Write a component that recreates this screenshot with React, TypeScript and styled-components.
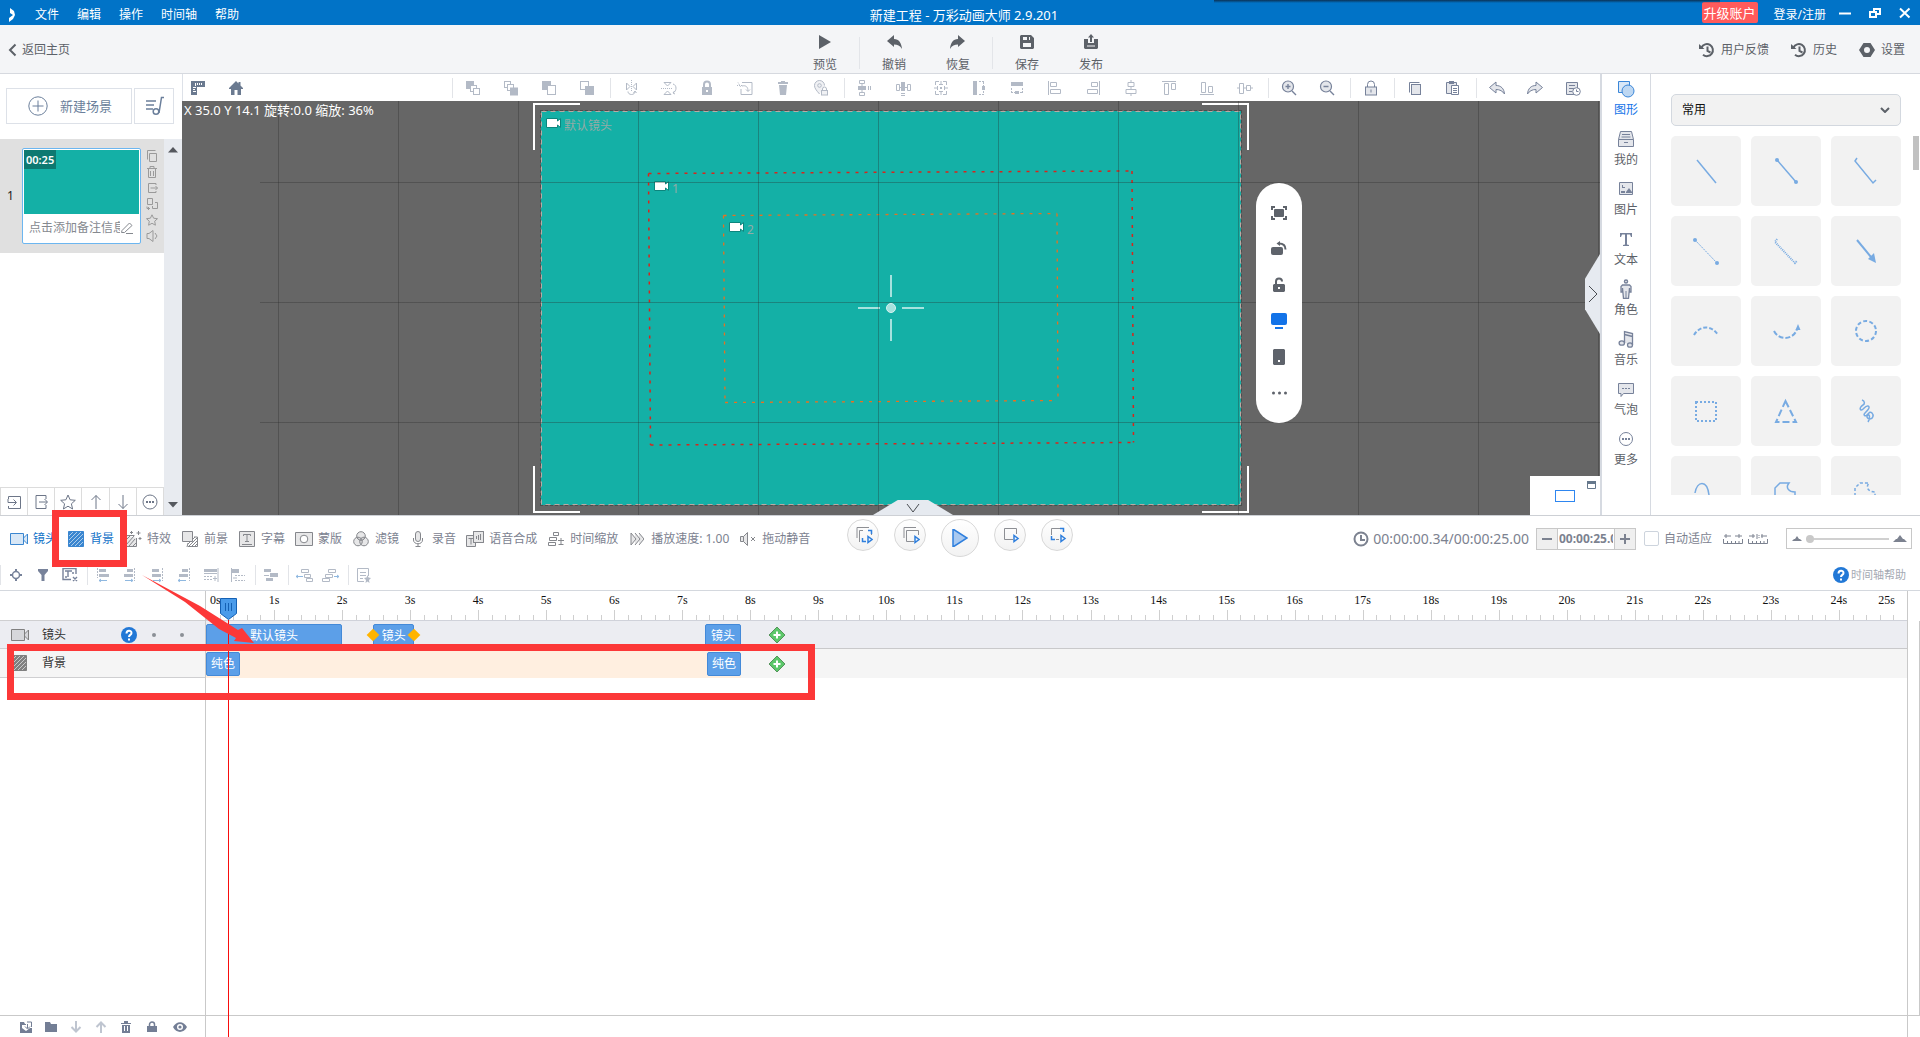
import React, { ReactNode } from 'react';
import styled, { createGlobalStyle, css } from 'styled-components';

const sans = `'Noto Sans', 'Noto Sans CJK SC', sans-serif`;
const serif = `'Liberation Serif', 'Noto Sans CJK SC', serif`;

const GlobalStyle = createGlobalStyle`
  *, *::before, *::after { box-sizing: border-box; }
  html, body { margin: 0; padding: 0; }
  body { font-family: ${sans}; font-size: 12px; line-height: 16px; color: #5c6168; background: #fff; overflow: hidden; }
  button, input, select { font: inherit; color: inherit; margin: 0; padding: 0; border: 0; background: none; }
  button { cursor: pointer; display: flex; align-items: center; justify-content: center; white-space: nowrap; }
  a { color: inherit; text-decoration: none; }
  ul { list-style: none; margin: 0; padding: 0; }
`;

/* ---------- icons ---------- */

const Svg = styled.svg`
  display: block;
  flex: none;
  fill: none;
  stroke: currentColor;
`;

const F = { fill: 'currentColor', stroke: 'none' };
const W = { fill: '#fff' };
const T = { fill: 'currentColor', fillOpacity: 0.2 };

const icons: Record<string, [number, number, ReactNode]> = {
  logo: [9, 16, <path {...F} d="M2 1l4 3 1 4-2 4-4 3v-4l4-3-3-2z" />],
  min: [12, 12, <path {...F} d="M0 5.500h12v2H0z" />],
  restore: [12, 12, <path strokeWidth="2" d="M5 4V2h6v5H8M1 5h6v5H1z" />],
  close: [12, 12, <path strokeWidth="2" d="M1 1.500l9.500 9M10.500 1.500L1 10.500" />],
  back: [9, 14, <path strokeWidth="2" d="M7.500 1.500L2 7l5.500 5.500" />],
  play: [14, 16, <path {...F} d="M1 1v14l12-7z" />],
  undoSolid: [16, 16, <path {...F} d="M1 7l7-6v4c5 0 7.500 4 8 10-2-3.500-4.500-4.500-8-4.500V13z" />],
  redoSolid: [16, 16, <path {...F} d="M15 7L8 1v4C3 5 .5 9 0 15c2-3.500 4.500-4.500 8-4.500V13z" />],
  save: [16, 16, <path {...F} fillRule="evenodd" d="M2 1h10l3 3v10l-1 1H2l-1-1V2zM4 3v3h7V3zM4 9v4h8V9zM8 3h2v3H8z" />],
  publish: [16, 16, <><path {...F} fillRule="evenodd" d="M1 5h4v4h6V5h4v9l-1 1H2l-1-1zM4 11.500v1h8v-1z" /><path {...F} d="M8 0l3 3.500H9V8H7V3.500H5z" /></>],
  history: [16, 16, <><path strokeWidth="2" d="M2.500 5.500A6 6 0 1 1 4 12.700M8.500 4.500V9l3 1.500" /><path {...F} d="M0 2v5h5.500z" /></>],
  gear: [16, 16, <path {...F} fillRule="evenodd" d="M4.500 1h7L16 8l-4.500 7h-7L0 8zM8 5a3 3 0 1 0 0 6 3 3 0 0 0 0-6z" />],
  plusCircle: [20, 20, <><circle cx="10" cy="10" r="9.200" /><path d="M10 4.500v11M4.500 10h11" /></>],
  playlist: [20, 20, <><path strokeWidth="1.500" d="M1 5h10M1 9h8M1 13h7M19 1.500h-2.500L14 17" /><circle cx="11" cy="15.500" r="2.800" strokeWidth="1.500" /></>],
  copySmall: [12, 12, <path d="M3.500 3.500h7v8h-7zM1.500 9.500v-9h8" />],
  trashSmall: [12, 12, <path d="M1 2.500h10M4 2V.5h4V2M2.500 3v8.500h7V3M4.500 5v5M7.500 5v5" />],
  exportSmall: [12, 12, <path d="M10 3V1.500H2.500v9H10V9M4.500 6h7M9.500 4l2 2-2 2" />],
  swapSmall: [12, 12, <path d="M1.500.5h5v6h-5zM9 4.500h2.500v6H6.500V8M1 8.500v2h3M2.500 9v3" />],
  starSmall: [12, 12, <path d="M6 .8l1.600 3.400 3.900.5-2.800 2.500.7 4-3.400-1.900-3.400 1.900.7-4L.5 4.700l3.900-.5z" />],
  soundSmall: [12, 12, <path d="M1 3.500h2l4-3v11l-4-3H1zM9 3l2 3-2 3" />],
  pen: [14, 14, <path d="M2 9.500L9.500 2l2.500 2.500-7.500 7H1.500zM6 12.500h7" />],
  up: [16, 16, <path d="M8 15V1.500M3.500 6L8 1.500 12.500 6" />],
  down: [16, 16, <path d="M8 1v13.500M3.500 10L8 14.500 12.500 10" />],
  upBold: [12, 12, <path strokeWidth="2" d="M6 12V2M1.500 6L6 1.500 10.500 6" />],
  downBold: [12, 12, <path strokeWidth="2" d="M6 0v10M1.500 6L6 10.500 10.500 6" />],
  importBox: [16, 16, <path d="M2.500 5V2.500h12v12h-12V12M2 5v3.500h8M7.500 5.500l3 3-3 3" />],
  exportBox: [16, 16, <path d="M13 5V1.500H3v13h10V11M6 8h8M11.500 5l3 3-3 3" />],
  star: [16, 16, <path d="M8 1l2.100 4.800 5.200.5-3.900 3.500 1.200 5.200L8 12.200 3.400 15l1.200-5.200L.7 6.300l5.200-.5z" />],
  more: [16, 16, <><circle cx="8" cy="8" r="7" /><path {...F} d="M4 7h2v2H4zM7 7h2v2H7zM10 7h2v2h-2z" /></>],
  triUp: [10, 6, <path {...F} d="M5 0l5 5.500H0z" />],
  triDown: [10, 6, <path {...F} d="M5 5.500L10 0H0z" />],

  ruler: [14, 14, <path {...F} fillRule="evenodd" d="M0 0h14v6H6v8H0zM4 2v3h1V2zM6 2v2h1V2zM8 2v2h1V2zM10 2v2h1V2zM2 6v1h3V6zM2 8v1h2V8zM2 10v1h3v-1z" />],
  home: [14, 14, <path {...F} d="M7 0l2.500 2.500V1h2v3.500L14 7v1h-2v6H8.500V9h-3v5H2V8H0V7z" />],
  toBack: [16, 16, <><rect {...F} x="1" y="1" width="8" height="8" /><rect {...W} x="5.500" y="5.500" width="6" height="6" /><rect {...W} x="8.500" y="8.500" width="6" height="6" /></>],
  toFront: [16, 16, <><rect x="1.500" y="1.500" width="6" height="6" /><rect x="4.500" y="4.500" width="6" height="6" {...W} /><rect {...F} x="7" y="7.500" width="8" height="8" /></>],
  backward: [16, 16, <><rect {...F} x="1" y="1" width="9" height="9" /><rect {...W} x="6.500" y="5.500" width="8" height="9" /></>],
  forward: [16, 16, <><rect x="1.500" y="1.500" width="8" height="8" /><rect {...F} x="6" y="6" width="9" height="9" /></>],
  flipH: [16, 16, <><path d="M3.500 3v7L7 6.500zM13.500 3v7L10 6.500z" /><path strokeDasharray="1 1" d="M8.500 0v11" /><path d="M5 11.500c0 4 7 4 7 0M10.500 13l1.500-2 1.500 2" /></>],
  flipV: [16, 16, <><path d="M3 2.500h7L6.500 6zM3 14.500h7L6.500 11z" /><path strokeDasharray="1 1" d="M0 8.500h12" /><path d="M12 4c4 1 4 7 0 9M13.500 11L12 13l2 1" /></>],
  lockSolid: [16, 16, <><path strokeWidth="2" d="M5 7V4.500a3 3 0 0 1 6 0V7" /><path {...F} fillRule="evenodd" d="M3 7h10v8H3zM7 10v2h2v-2z" /></>],
  resetBox: [16, 16, <><path d="M5 2.500h10v12H4V9M5 6c4-1 6 1 6 5M9 9.500l2 2 2-2" /><path strokeDasharray="1 1" d="M0 5.500h5M1 2.500l3 5" /></>],
  trashSolid: [16, 16, <path {...F} d="M3 2h3V1h4v1h3v2H3zM4 5h8l-1 10H5z" />],
  pinLock: [16, 16, <><path {...T} d="M6.500 14C3 10 1.500 8 1.500 5.500a5 5 0 0 1 10 0" /><circle cx="6.500" cy="5.500" r="1.800" /><rect {...T} x="8.500" y="10.500" width="6" height="4.500" /><path d="M9.500 10.500V9a2 2 0 0 1 4 0v1.500" /></>],
  distV: [16, 16, <><path d="M2.500.5h5v3h-5zM2.500 12.500h5v3h-5zM5 3.500v9M11.500 6v4M13.500 6v4" /><path {...F} d="M1 6h8v4H1z" /></>],
  distH: [16, 16, <><path d="M1.500 4.500h3v6h-3zM12.500 4.500h3v6h-3zM4.500 7.500h8M6 13.500h4M6 15.500h4" /><path {...F} d="M6 2h4v9H6z" /></>],
  spread: [16, 16, <><path d="M2.500 5V1.500H6M10 1.500h3.500V5M13.500 11v3.500H10M6 14.500H2.500V11M8 1v4M8 11v4M1 8h3M12 8h3" /><path {...F} d="M7 7h2v2H7zM6 4h4v1H6zM6 11h4v1H6zM4 6h1v4H4zM11 6h1v4h-1z" /></>],
  sameH: [16, 16, <><path {...F} d="M2 1h4v14H2z" /><path strokeDasharray="2 1" d="M8 1.500h6M8 14.500h6M12.500 2v12" /><path {...F} d="M11 6h3v4h-3z" /></>],
  sameW: [16, 16, <><path {...F} d="M2 2h12v4H2z" /><path strokeDasharray="2 1" d="M2.500 8v5M13.500 8v5M2 12.500h12" /><path {...F} d="M6 11h4v3H6z" /></>],
  alLeft: [16, 16, <path d="M1.500 1v14M3.500 2.500h6v4h-6zM3.500 9.500h10v4h-10z" />],
  alRight: [16, 16, <path d="M14.500 1v14M6.500 2.500h6v4h-6zM2.500 9.500h10v4h-10z" />],
  alCenter: [16, 16, <path d="M8 0v2M8 6.500v3M8 13.500V16M5 2.500h6v4H5zM3 9.500h10v4H3z" />],
  alTop: [16, 16, <path d="M1 1.500h14M3.500 3.500h4v11h-4zM10.500 3.500h4v6h-4z" />],
  alBottom: [16, 16, <path d="M1 14.500h14M2.500 2.500h4v10h-4zM9.500 6.500h4v6h-4z" />],
  alMiddle: [16, 16, <path d="M0 8h2M6 8h3M14 8h2M2.500 3.500h4v10h-4zM9.500 5.500h4v5h-4z" />],
  zoomIn: [16, 16, <><circle {...T} cx="7" cy="6.500" r="5.500" strokeWidth="1.200" /><path strokeWidth="1.400" d="M7 4v5M4.500 6.500h5M11 11l4 4" /></>],
  zoomOut: [16, 16, <><circle {...T} cx="7" cy="6.500" r="5.500" strokeWidth="1.200" /><path strokeWidth="1.400" d="M4.500 6.500h5M11 11l4 4" /></>],
  lock: [16, 16, <><rect {...T} x="2.500" y="7" width="11" height="8" /><path d="M4.500 7V4.500a3.500 3.500 0 0 1 7 0V7" /><path {...F} d="M7.500 9.500h1v3h-1z" /></>],
  copy: [16, 16, <><rect {...T} x="4.500" y="4.500" width="9" height="10" /><path d="M2.500 12.500v-10h10" /></>],
  paste: [16, 16, <><path {...T} d="M1.500 2.500h10v11h-10z" /><path {...F} d="M4 1h5v3H4z" /><path {...W} d="M6.500 5.500h7v9h-7z" /><path d="M8 8.500h4M8 10.500h4M8 12.500h4" /></>],
  undo: [18, 16, <path {...T} d="M1.500 7.500L8 2v3.500c5 0 8 3 8.500 8.500-2-3-4.500-4.500-8.500-4.500V13z" />],
  redo: [18, 16, <path {...T} d="M16.500 7.500L10 2v3.500C5 5.500 2 8.500 1.500 14c2-3 4.500-4.500 8.500-4.500V13z" />],
  log: [16, 16, <><path {...T} d="M9 14.500H1.500v-12h11V8" /><path d="M4 5.500h6M4 8.500h5M4 11.500h3" /><circle {...W} cx="11.500" cy="11.500" r="3.800" /><path d="M11.500 9.500v2h2" /></>],

  fit: [16, 16, <><path strokeWidth="2" d="M1 5V2h3M12 2h3v3M15 11v3h-3M4 14H1v-3" /><rect {...F} x="3" y="4" width="10" height="8" rx="1" /></>],
  rotate: [16, 16, <><rect {...F} x="0" y="6" width="12" height="8" rx="2" /><path strokeWidth="2" d="M8 2.500c4 0 6.500 2 6.500 6" /><path {...F} d="M5.500 2.500L9 0v5z" /></>],
  unlock: [16, 16, <><path strokeWidth="2" d="M5 8V4.500a3 3 0 0 1 6 0" /><path {...F} fillRule="evenodd" d="M3 7h10l1 1v6l-1 1H3l-1-1V8zM7 10v2h2v-2z" /></>],
  screen: [16, 16, <><rect {...F} x="0" y="0" width="16" height="12" rx="2" /><path {...F} d="M4 14h8v2H4z" /></>],
  phone: [16, 16, <path {...F} fillRule="evenodd" d="M3 0h10l1 1v14l-1 1H3l-1-1V1zM7 11v2h2v-2z" />],
  dots: [16, 16, <><circle {...F} cx="2.500" cy="8" r="1.500" /><circle {...F} cx="8.500" cy="8" r="1.500" /><circle {...F} cx="14.500" cy="8" r="1.500" /></>],
  windowSm: [10, 9, <><path d="M.5.5h8v7h-8z" /><path {...F} d="M0 0h9v3H0z" /></>],

  shapes: [18, 18, <><path {...T} d="M1.500 1.500h11v11h-11z" /><circle cx="11" cy="11" r="6" fill="#bdd7f2" /></>],
  drawer: [18, 18, <><path {...T} d="M3.500 1.500h11l2 8v7h-15v-7zM1.500 9.500h15M5 4.500h8M4.500 7h9" /><path {...F} d="M7 12h4v1H7z" /></>],
  image: [18, 18, <><path {...T} d="M2.500 2.500h13v12h-13z" /><path {...F} d="M9 12l3-4 3 4v1H9zM4 11h4v2H4zM5 5h1v2h2v1H5z" /></>],
  text: [18, 18, <path {...F} d="M3 3h12v4h-1l-1-2.500h-3v10l2 .5v1H6v-1l2-.5v-10H5L4 7H3z" />],
  person: [14, 20, <><circle cx="7" cy="2.500" r="1.500" strokeWidth="1.500" /><path {...T} strokeWidth="1.300" d="M3.500 6h7l1.500 1.500V13h-1.500V9l-1 10.500h-5L3.500 9v4H2V7.500z" /><path d="M7 12v7" /></>],
  music: [18, 18, <><path {...T} strokeWidth="1.300" d="M7.500 13V1.500l8 2V15M7.500 4.500l8 2" /><ellipse {...T} strokeWidth="1.300" cx="4.800" cy="13" rx="2.700" ry="2.200" /><ellipse {...T} strokeWidth="1.300" cx="13" cy="15" rx="2.500" ry="2.200" /></>],
  bubble: [18, 18, <><path {...T} d="M1.500 3.500h15v10h-10L4 16.500v-3H1.500z" /><path strokeDasharray="2 1" d="M5 8.500h8" /></>],
  moreNav: [18, 18, <><circle cx="9" cy="9" r="6.500" /><path {...F} d="M5 8h2v2H5zM8 8h2v2H8zM11 8h2v2h-2z" /></>],

  camera: [18, 14, <path {...T} d="M.5 1.500h13v11H.5zM13.500 6l4-4v10l-4-4" />],
  hatch: [16, 16, <><path fill="currentColor" d="M.5.5h15v15H.5z" /><path stroke="#fff" strokeOpacity=".65" strokeWidth=".9" d="M1 5l4-4M1 9l8-8M1 13L13 1M3 15L15 3M7 15l8-8M11 15l4-4" /></>],
  effect: [18, 16, <><path {...T} d="M1.500 4.500h9M12.500 7v8.500h-11V4.500" /><path d="M2 9l4-4M2 14l8-9M5 15l6-7M9 15l3-3M14.500 0v4M12.500 2h4M16 6v3M14.500 7.500h3M7.500 0v3M6 1.500h3" /></>],
  fore: [16, 16, <><path d="M6 12l-1 4M6 15.500h9.500V6H12M6 13l7-7M7 15l8-8M10 15l5-5M13 15l2-2" /><path {...W} d="M.5.5h10v10H.5z" /><path {...T} stroke="none" d="M.5.5h10v10H.5z" /></>],
  subtitle: [16, 16, <><path {...T} d="M.5.5h15v15H.5z" /><path d="M4.500 5V3.500h7V5M8 3.500v7M6 10.500h4M3 13.500h10" /></>],
  mask: [18, 14, <><path {...T} d="M.5.5h17v13H.5z" /><circle {...W} cx="9" cy="7" r="3.800" /></>],
  filter3: [16, 16, <><circle {...T} cx="8" cy="5" r="4.300" /><circle {...T} cx="5" cy="10.500" r="4.300" /><circle {...T} cx="11" cy="10.500" r="4.300" /></>],
  mic: [12, 16, <><rect {...T} x="3.500" y=".5" width="5" height="10" rx="2.500" /><path d="M1.500 7v2c0 5 9 5 9 0V7M6 12.500V15M3.500 15.500h5" /></>],
  tts: [18, 16, <><path {...T} d="M.5 4.500h9v11h-9z" /><path {...W} d="M7.500.5h10v11h-10z" /><path {...T} d="M7.500.5h10v11h-10z" /><path d="M2.500 7.500h5M5 7.500v6M10.500 5v3M12.500 4v5M14.500 3v6" /></>],
  scale: [16, 14, <path d="M5.500.5h5v3h-5zM1.500 5.500h7v3h-7zM.5 10.500h7v3h-7zM10 8.500h6M13 6v6M10.500 12.500h5" />],
  speed: [14, 14, <path {...T} d="M1 1l5 6-5 6V1M5 1l5 6-5 6M9 1l5 6-5 6" />],
  mute: [18, 14, <path {...T} d="M1.500 4.500h3v5h-3zM4.500 4.500l4-4v13l-4-4M12 5l4 4M16 5l-4 4" />],
  clock: [16, 16, <><circle cx="8" cy="8" r="6.500" strokeWidth="2" /><path strokeWidth="2" d="M8 4v5h4" /></>],
  minus: [12, 12, <path {...F} d="M1 5h10v2H1z" />],
  plus: [12, 12, <path {...F} d="M1 5h4V1h2v4h4v2H7v4H5V7H1z" />],
  fitOut: [20, 10, <path d="M1 2h7M12 2h7M3 0v4M16 0v4M.5 5v4.500h19V5M4.500 7v2M8.500 7v2M12.500 7v2M16 7v2" />],
  fitOne: [20, 10, <path d="M1 2h6M13 2h6M5 0v4M9 0v5M11 1v1M11 3v1M14 0v4M.5 5v4.500h19V5M4.500 7v2M8.500 7v2M12.500 7v2M16 7v2" />],
  hillS: [10, 5, <path {...F} d="M0 5l2-2h1l2-3 2 3h1l2 2z" />],
  hillL: [14, 7, <path {...F} d="M0 7l3-3h1l3-4 3 4h1l3 3z" />],
  help: [16, 16, <><circle cx="8" cy="8" r="8" fill="#2278d6" stroke="none" /><path stroke="#fff" strokeWidth="2" d="M5.500 6.500c0-3.500 5-3.500 5-.5 0 2-2.500 1.800-2.500 4" /><path fill="#fff" stroke="none" d="M7 11.500h2v2H7z" /></>],

  locate: [12, 12, <><circle cx="6" cy="6" r="3.500" strokeWidth="1.500" /><path strokeWidth="2" d="M6 0v3M6 9v3M0 6h3M9 6h3" /></>],
  funnel: [12, 12, <path {...F} d="M1 0h10v2L7.500 6v6h-3V6L1 2z" />],
  textDel: [16, 14, <><path strokeWidth="1.400" d="M9 11.500H1v-11h13V6" /><path d="M3 3h7M6 3v6M3 9h2M10 5h2M11 9l4 4M15 9l-4 4" strokeWidth="1.400" /></>],
  t1: [14, 14, <><path strokeDasharray="2 1" d="M1.500 0v10" /><path {...F} d="M3 1h7v3H3zM3 6h10v3H3z" /><path stroke="#8fb8e0" d="M3 12.500h8M5 11l-2 1.500L5 14" /></>],
  t2: [14, 14, <><path strokeDasharray="2 1" d="M11.500 0v13" /><path {...F} d="M4 1h6v3H4zM1 6h9v3H1z" /><path stroke="#8fb8e0" d="M2 12.500h8M8 11l2 1.500L8 14" /></>],
  t3: [14, 14, <><path strokeDasharray="2 1" d="M12.500 0v13" /><path {...F} d="M2 1h7v3H2zM2 6h9v3H2z" /><path stroke="#8fb8e0" d="M3 12.500h8M9 11l2 1.500L9 14" /></>],
  t4: [14, 14, <><path strokeDasharray="2 1" d="M12.500 0v13" /><path {...F} d="M5 1h6v3H5zM2 6h9v3H2z" /><path stroke="#8fb8e0" d="M1 12.500h8M3 11l-2 1.500L3 14" /></>],
  t5: [16, 14, <><path d="M15 0v14M1 5.500h13" /><path {...F} d="M1 1h13v3H1z" /><path strokeDasharray="2 1" d="M1 8.500h8M1 11.500h8" /><path d="M10 10.500h4M12 8v5" /></>],
  t6: [16, 14, <><path d="M1.500 0v14" /><path {...F} d="M2 1h7v4H2z" /><path strokeDasharray="2 1" d="M5 7.500h10M5 12.500h10" /><path d="M3 10h4" /></>],
  t7: [16, 14, <><path {...F} d="M1 1h7v3H1zM7 5h8v4H7zM3 10h7v3H3z" /><path d="M1 7.500h5" /></>],
  t8: [18, 14, <><path d="M6.500 1.500h7v3h-7zM9.500 6.500h6v3h-6zM11.500 10.500h6v3h-6z" /><path stroke="#8fb8e0" d="M1 8.500h7M3 7L1 8.500 3 10" /></>],
  t9: [18, 14, <><path d="M6.500 1.500h7v3h-7zM3.500 6.500h7v3h-7zM.5 10.500h7v3h-7z" /><path stroke="#8fb8e0" d="M12 8.500h5M15 7l2 1.500L15 10" /></>],
  t10: [14, 15, <><path d="M7 13.500H.5V.5h11V8M3 4.500h6M3 7.500h6M3 10.500h3" /><path {...F} d="M10.500 7l1 2.500 2.500.5-2 2 .5 3-2-1.500-2 1.500.5-3-2-2 2.500-.5z" /></>],

  folderIn: [12, 12, <><path {...F} fillRule="evenodd" d="M0 1h4l1 2h1v1H2v3l4 3 4-3h2v5H0z" /><path d="M7 1h4.500v5M7.500 3v4M5 5.500L7.500 8 10 5.500" /></>],
  folder: [12, 12, <path {...F} d="M0 1h5l1 2h6v8H0z" />],
  trashB: [12, 12, <path {...F} fillRule="evenodd" d="M1 2h3V0h4v2h3v1H1zM2 4h8v8H2zM4 5v5h1V5zM7 5v5h1V5z" />],
  lockB: [12, 12, <><path strokeWidth="1.500" d="M3.500 6V3.500a2.500 2.500 0 0 1 5 0V6" /><path {...F} d="M1 5h10v6H1z" /></>],
  eye: [14, 10, <><path {...F} fillRule="evenodd" d="M0 5c3.500-6.500 10.500-6.500 14 0-3.500 6.500-10.500 6.500-14 0zM7 2a3 3 0 1 0 0 6 3 3 0 0 0 0-6z" /><circle {...F} cx="7" cy="5" r="1.600" /></>],
  chevDown: [14, 10, <path d="M1 1l6 8 6-8" />],
  chevRight: [10, 18, <path d="M1 1l8 8-8 8" />],
  selectArrow: [10, 6, <path strokeWidth="2" d="M1 1l4 4 4-4" />],
};

const Icon = ({ name }: { name: string }) => {
  const [w, h, node] = icons[name];
  return (
    <Svg width={w} height={h} viewBox={`0 0 ${w} ${h}`} aria-hidden="true">
      {node}
    </Svg>
  );
};

/* ---------- shell ---------- */

const Shell = styled.div`
  position: relative;
  display: flex;
  flex-direction: column;
  height: 100vh;
  overflow: hidden;
`;

const TitleBar = styled.header`
  position: relative;
  display: grid;
  grid-template-columns: 1fr auto 1fr;
  align-items: center;
  height: 25px;
  flex: none;
  padding-left: 8px;
  background: #0173c7;
  color: #fff;
`;

const HiddenDock = styled.div`
  position: absolute;
  top: 0;
  right: 200px;
  width: 506px;
  height: 3px;
  background: linear-gradient(#0b3357, rgba(1, 115, 199, 0));
`;

const MenuBar = styled.nav`
  display: flex;
  align-items: center;
  gap: 18px;
  padding-top: 4px;
`;

const WindowTitle = styled.h1`
  margin: 0;
  padding-top: 4px;
  font-size: 13px;
  line-height: 16px;
  font-weight: 400;
`;

const WindowTools = styled.div`
  display: flex;
  justify-content: flex-end;
  align-items: center;
  padding-right: 8px;
`;

const UpgradeButton = styled.button`
  width: 56px;
  height: 21px;
  margin-right: 16px;
  border-radius: 2px;
  background: #ff5b5b;
  font-size: 13px;
`;

const LoginLink = styled.a`
  margin-right: 12px;
  padding-top: 4px;
`;

const WindowButton = styled.button`
  width: 14px;
  height: 20px;
  & + & { margin-left: 16px; }
`;

const HeaderBar = styled.div`
  display: grid;
  grid-template-columns: 1fr auto 1fr;
  align-items: center;
  height: 49px;
  flex: none;
  background: #f4f5f7;
  border-bottom: 1px solid #d6d9df;
`;

const BackLink = styled.a`
  display: flex;
  align-items: center;
  gap: 5px;
  padding: 2px 0 0 8px;
`;

const HeaderGroups = styled.div`
  display: flex;
  padding: 8px 4px 0 0;
`;

const HeaderGroup = styled.div`
  display: flex;
  padding: 0 2px;
  & + & { border-left: 1px solid #e3e5e9; }
`;

const HeaderButton = styled.button`
  width: 64px;
  height: 32px;
  flex-direction: column;
  gap: 7px;
`;

const HeaderLinks = styled.div`
  display: flex;
  justify-content: flex-end;
  gap: 22px;
  padding: 2px 15px 0 0;
`;

const HeaderLink = styled.button`
  gap: 6px;
`;

const Workspace = styled.main`
  display: flex;
  flex: none;
  border-bottom: 1px solid #cdd0d5;
`;

/* ---------- scene panel ---------- */

const ScenePanel = styled.aside`
  display: flex;
  flex-direction: column;
  width: 182px;
  flex: none;
`;

const SceneActions = styled.div`
  display: grid;
  grid-template-columns: 126px 40px;
  gap: 2px;
  padding: 14px 6px 15px;
  color: #6b7f9b;
`;

const OutlineButton = styled.button`
  height: 36px;
  gap: 12px;
  padding-left: 4px;
  border: 1px solid #dde1e8;
  font-size: 13px;
  svg { margin-left: -2px; }
`;

const SceneBody = styled.div`
  display: flex;
  flex: 1;
`;

const SceneColumn = styled.div`
  display: flex;
  flex-direction: column;
  flex: 1;
`;

const SceneList = styled.ul`
  flex: 1;
`;

const SceneItem = styled.li`
  display: grid;
  grid-template-columns: 22px 119px 22px;
  padding: 9px 0;
  background: #e0e0e0;
  color: #222;
`;

const SceneNumber = styled.span`
  align-self: center;
  padding-left: 7px;
`;

const SceneCard = styled.div`
  height: 96px;
  padding: 1px;
  border: 1px solid #6cb6f0;
  border-radius: 2px;
  background: #fff;
`;

const Thumb = styled.div`
  height: 64px;
  background: #14b0a6;
`;

const Duration = styled.span`
  display: inline-block;
  height: 19px;
  padding: 2px 2px 0;
  background: #0e7971;
  color: #fff;
  font-size: 11px;
  font-weight: 600;
`;

const Caption = styled.label`
  display: flex;
  align-items: center;
  height: 28px;
  padding: 0 5px 0 5px;
  color: #85898f;
`;

const CaptionInput = styled.input`
  flex: 1;
  min-width: 0;
  overflow: hidden;
  &::placeholder { color: #85898f; opacity: 1; }
`;

const SceneTools = styled.div`
  display: flex;
  flex-direction: column;
  color: #9a9a9a;
  button { height: 16px; }
`;

const SceneFooter = styled.div`
  display: grid;
  grid-template-columns: repeat(6, 1fr);
  height: 28px;
  border: solid #dcdcdc;
  border-width: 1px 0 0 1px;
  color: #6d7688;
  button { border-right: 1px solid #dcdcdc; }
`;

const SceneScroll = styled.div`
  display: flex;
  flex-direction: column;
  justify-content: space-between;
  align-items: center;
  width: 18px;
  padding: 8px 0 7px;
  background: #e8ebf0;
  color: #55585e;
`;

/* ---------- stage ---------- */

const StageColumn = styled.section`
  display: flex;
  flex-direction: column;
  flex: 1;
  min-width: 0;
`;

const StageToolbar = styled.div`
  display: flex;
  height: 27px;
  padding-right: 4px;
  align-items: center;
  border-left: 1px solid #dde1e8;
  color: #6b7a90;
`;

const StageHome = styled.div`
  display: flex;
  flex: 1;
  button { width: 38px; height: 20px; }
  button:first-child { margin-left: -4px; }
`;

const ToolGroup = styled.div<{ $muted?: boolean; $cell?: number }>`
  display: flex;
  align-items: center;
  height: 20px;
  padding: 0 4px 0 1px;
  border-left: 1px solid #e2e4e8;
  color: ${(p) => (p.$muted ? '#b3bac6' : '#77829a')};
  button { width: ${(p) => p.$cell ?? 38}px; height: 20px; }
`;

const Stage = styled.div`
  position: relative;
  display: flex;
  justify-content: center;
  padding: 2px 0;
  background: #666;
`;

const gridLines = css`
  content: '';
  position: absolute;
  inset: 0;
  pointer-events: none;
`;

const StageGrid = styled.div`
  &::before {
    ${gridLines}
    background: repeating-linear-gradient(90deg, transparent 0 96px, rgba(40, 40, 40, 0.32) 96px 97px, transparent 97px 120px);
  }
  &::after {
    ${gridLines}
    left: 78px;
    background: repeating-linear-gradient(180deg, transparent 0 81px, rgba(40, 40, 40, 0.32) 81px 82px, transparent 82px 120px);
  }
`;

const StageInfo = styled.div`
  position: absolute;
  top: 0;
  left: 2px;
  color: #fff;
  font-size: 13px;
  line-height: 18px;
`;

const corner = (x: string, y: string) => `
  linear-gradient(#fff 0 0) ${x} ${y} / 47px 2px no-repeat,
  linear-gradient(#fff 0 0) ${x} ${y} / 2px 47px no-repeat`;

const Brackets = styled.div`
  padding: 8px;
  background: ${corner('left', 'top')}, ${corner('right', 'top')}, ${corner('left', 'bottom')}, ${corner('right', 'bottom')};
`;

const Artboard = styled.div`
  position: relative;
  width: 700px;
  height: 394px;
  background: #14b0a6;
  outline: 1px dashed #4c4c4c;
`;

const Guides = styled(Svg)`
  position: absolute;
  inset: 0;
`;

const CameraTag = styled.span<{ $x: number; $y: number }>`
  position: absolute;
  left: ${(p) => p.$x}px;
  top: ${(p) => p.$y}px;
  display: flex;
  gap: 2px;
  line-height: 18px;
  color: #93aba6;
`;

const StagePill = styled.div`
  position: absolute;
  top: 82px;
  left: calc(50% + 365px);
  display: flex;
  flex-direction: column;
  width: 46px;
  height: 240px;
  padding: 12px 0;
  border-radius: 23px;
  background: #fff;
`;

const PillButton = styled.button<{ $on?: boolean }>`
  height: 36px;
  color: ${(p) => (p.$on ? '#1373e8' : '#5e636b')};
`;

const sideTab = css`
  position: absolute;
  background: #e6eaf0;
  color: #4a4d52;
`;

const CollapseRight = styled.button`
  ${sideTab}
  right: 0;
  top: 153px;
  width: 15px;
  height: 80px;
  clip-path: polygon(100% 0, 0 31%, 0 69%, 100% 100%);
`;

const CollapseDown = styled.button`
  ${sideTab}
  bottom: 0;
  left: calc(50% - 18px);
  width: 80px;
  height: 15px;
  clip-path: polygon(0 100%, 31% 0, 69% 0, 100% 100%);
`;

const MiniMap = styled.div`
  position: absolute;
  right: 0;
  bottom: 0;
  display: flex;
  justify-content: flex-end;
  align-items: flex-start;
  gap: 12px;
  width: 70px;
  height: 39px;
  padding: 5px 3px 0;
  background: #fff;
  color: #66788c;
`;

const MiniView = styled.div`
  width: 20px;
  height: 12px;
  margin-top: 9px;
  border: 1px solid #2e86f0;
`;

/* ---------- library ---------- */

const LibraryNav = styled.nav`
  display: flex;
  flex-direction: column;
  width: 51px;
  flex: none;
  gap: 9px;
  padding-top: 3px;
  border-left: 2px solid #d6dae1;
  border-right: 1px solid #d6dae1;
`;

const NavButton = styled.button<{ $on?: boolean }>`
  flex-direction: column;
  gap: 1px;
  height: 41px;
  color: ${(p) => (p.$on ? '#1373e8' : '#5c6168')};
`;

const NavIcon = styled.span<{ $on?: boolean }>`
  display: flex;
  align-items: center;
  height: 24px;
  color: ${(p) => (p.$on ? '#3a86d8' : '#77829a')};
`;

const Library = styled.aside`
  display: flex;
  flex-direction: column;
  gap: 10px;
  width: 269px;
  flex: none;
  padding: 20px 1px 20px 20px;
`;

const SelectBox = styled.div`
  display: grid;
  width: 230px;
  align-items: center;
  > * { grid-area: 1 / 1; }
  svg { justify-self: end; margin-right: 11px; pointer-events: none; }
`;

const CategorySelect = styled.select`
  appearance: none;
  width: 100%;
  height: 32px;
  padding: 0 10px;
  border: 1px solid #d3d8df;
  border-radius: 5px;
  background: #f2f2f2;
  color: #111;
`;

const ShapeScroll = styled.div`
  display: flex;
  justify-content: space-between;
  flex: 1 1 0px;
  min-height: 0;
  overflow: hidden;
`;

const ShapeGrid = styled.div`
  display: grid;
  grid-template-columns: repeat(3, 70px);
  grid-auto-rows: 70px;
  gap: 10px;
`;

const ShapeTile = styled.button`
  border-radius: 5px;
  background: #f2f2f2;
  color: #78abe2;
`;

const ScrollThumb = styled.div`
  width: 6px;
  height: 34px;
  background: #c1c1c1;
`;

/* ---------- timeline ---------- */

const Timeline = styled.section`
  display: flex;
  flex-direction: column;
  flex: 1;
  min-height: 0;
`;

const TransportRow = styled.div`
  display: grid;
  grid-template-columns: 1fr auto 1fr;
  height: 44px;
  color: #7c8290;
`;

const ObjectTools = styled.div`
  display: flex;
  gap: 10px;
  padding-left: 10px;
`;

const ObjectButton = styled.button<{ $on?: boolean }>`
  gap: 5px;
  height: 45px;
  color: ${(p) => (p.$on ? '#1172c8' : '#7c8290')};
`;

const ObjectIcon = styled.span<{ $on?: boolean }>`
  display: flex;
  justify-content: center;
  width: 18px;
  color: ${(p) => (p.$on ? '#3a86d0' : '#85878c')};
`;

const Transport = styled.div`
  display: flex;
  align-items: flex-start;
  gap: 15px;
  padding-top: 3px;
`;

const RoundButton = styled.button<{ $big?: boolean }>`
  width: ${(p) => (p.$big ? 38 : 32)}px;
  height: ${(p) => (p.$big ? 38 : 32)}px;
  border: 1px solid #d8d8d8;
  border-radius: 50%;
  background: linear-gradient(#fff, #f2f2f2);
  color: #8d8f94;
`;

const TransportRight = styled.div`
  display: flex;
  justify-content: flex-end;
  align-items: center;
  padding-right: 8px;
`;

const TimeCode = styled.span`
  margin: 0 7px 0 4px;
  font-size: 14px;
`;

const Stepper = styled.div`
  display: grid;
  grid-template-columns: 20px 58px 20px;
  height: 22px;
  border: 1px solid #c8c8c8;
  button { background: #efefef; }
`;

const StepInput = styled.input`
  width: 58px;
  padding: 0 1px;
  border: solid #c8c8c8;
  border-width: 0 1px;
  font-weight: 700;
  text-overflow: clip;
`;

const FitLabel = styled.label`
  display: flex;
  align-items: center;
  gap: 5px;
  margin: 0 8px;
`;

const FitCheck = styled.input`
  appearance: none;
  width: 15px;
  height: 15px;
  border: 1px solid #cdd4dd;
  border-radius: 2px;
`;

const FitButton = styled.button`
  width: 25px;
`;

const ZoomBox = styled.div`
  display: flex;
  align-items: center;
  gap: 4px;
  width: 126px;
  height: 21px;
  margin-left: 16px;
  padding: 0 4px 0 5px;
  border: 1px solid #c8c8c8;
`;

const ZoomRange = styled.input`
  appearance: none;
  flex: 1;
  min-width: 0;
  height: 8px;
  background: linear-gradient(#d0d0d0 0 0) center / 100% 2px no-repeat;
  &::-webkit-slider-thumb {
    appearance: none;
    width: 8px;
    height: 8px;
    border-radius: 50%;
    background: #c9c9c9;
  }
`;

const EditRow = styled.div`
  display: flex;
  align-items: center;
  height: 30px;
`;

const HelpLink = styled.a`
  display: flex;
  align-items: center;
  gap: 2px;
  margin-left: auto;
  padding-right: 14px;
  font-size: 11px;
  color: #a4a9b2;
`;

const TrackBody = styled.div`
  display: flex;
  flex: 1;
  min-height: 0;
  border-top: 1px solid #d4d8de;
`;

const TrackHeads = styled.div`
  display: flex;
  flex-direction: column;
  width: 206px;
  flex: none;
  border-right: 1px solid #c9c9c9;
`;

const rowTone = {
  ruler: css`height: 30px; border-bottom: 1px solid #d0d2da;`,
  camera: css`height: 28px; background: #ecedf2; border-bottom: 1px solid #c9c9cb;`,
  back: css`height: 29px; background: #f5f5f5;`,
};

const TrackHead = styled.div<{ $tone: keyof typeof rowTone }>`
  display: grid;
  grid-template-columns: 31px 74px 26px 24px 32px;
  align-items: center;
  padding-left: 11px;
  color: #333;
  ${(p) => rowTone[p.$tone]}
  border-bottom: 1px solid #cfcfd1;
  > svg { color: #808080; }
`;

const Dot = styled.span`
  justify-self: center;
  width: 4px;
  height: 4px;
  border-radius: 50%;
  background: #8b8f96;
`;

const HeadHelp = styled.button`
  justify-self: center;
`;

const TrackFooter = styled.div`
  display: grid;
  grid-template-columns: repeat(5, 25px) 28px 28px;
  height: 22px;
  margin-top: auto;
  padding-left: 13px;
  border-top: 1px solid #c9c9c9;
  color: #737e95;
`;

const FootButton = styled.button<{ $muted?: boolean }>`
  color: ${(p) => (p.$muted ? '#bfc5d0' : '#737e95')};
`;

const TrackArea = styled.div`
  position: relative;
  display: flex;
  flex-direction: column;
  flex: 1;
  border-right: 1px solid #c9c9c9;
`;

const Ruler = styled.div`
  display: grid;
  grid-template-columns: repeat(25, 1fr);
  ${rowTone.ruler}
`;

const Second = styled.div`
  display: flex;
  flex-direction: column;
  justify-content: space-between;
  min-width: 0;
`;

const SecondLabels = styled.div`
  display: flex;
  justify-content: space-between;
  font-family: ${serif};
  line-height: 18px;
  color: #111;
`;

const SecondLabel = styled.span<{ $edge?: 'start' | 'end' }>`
  width: 40px;
  margin-left: -20px;
  text-align: center;
  ${(p) => p.$edge === 'start' && css`margin-left: 4px; text-align: left;`}
  ${(p) => p.$edge === 'end' && css`width: auto; margin: 0 12px 0 0;`}
`;

const Ticks = styled.div`
  display: flex;
  align-items: flex-end;
  height: 10px;
`;

const Tick = styled.i<{ $major?: boolean }>`
  flex: 1;
  height: ${(p) => (p.$major ? 10 : 5)}px;
  border-left: 1px solid #cfcfcf;
`;

const Track = styled.div<{ $tone: keyof typeof rowTone }>`
  position: relative;
  ${(p) => rowTone[p.$tone]}
`;

const TrackSpan = styled.div`
  position: absolute;
  inset: 0 auto 0 0;
  background: #ffefe0;
`;

const Clip = styled.button`
  position: absolute;
  top: 3px;
  height: 24px;
  border: 1px solid #4389d8;
  border-radius: 2px;
  background: #5c9fe8;
  color: #fff;
`;

const Marker = styled.button<{ $add?: boolean }>`
  position: absolute;
  top: 50%;
  transform: translate(-50%, -50%);
  ${(p) => !p.$add && css`
    width: 9px;
    height: 9px;
    transform: translate(-50%, -50%) rotate(45deg);
    background: #ffb400;
  `}
`;

const Playhead = styled.div`
  position: absolute;
  top: 7px;
  bottom: 0;
  display: flex;
  flex-direction: column;
  align-items: center;
  width: 17px;
  margin-left: -9px;
  pointer-events: none;
  &::after {
    content: '';
    flex: 1;
    width: 1px;
    background: #f80d0d;
  }
`;

const AreaFooter = styled.div`
  height: 22px;
  margin-top: auto;
  border-top: 1px solid #c9c9c9;
`;

const TrackEdge = styled.div`
  width: 12px;
  margin: 30px 0 21px;
  border-right: 1px solid #c9c9c9;
  border-bottom: 1px solid #c9c9c9;
`;

/* ---------- callouts drawn over the editor ---------- */

const Callout = styled.div<{ $x: number; $y: number; $w: number; $h: number }>`
  position: absolute;
  left: ${(p) => p.$x}px;
  top: ${(p) => p.$y}px;
  width: ${(p) => p.$w}px;
  height: ${(p) => p.$h}px;
  border: 7px solid #fc3838;
  pointer-events: none;
`;

const CalloutArrow = styled(Svg)`
  position: absolute;
  left: 140px;
  top: 574px;
  pointer-events: none;
`;

/* ---------- data ---------- */

const TOTAL = 25;
const at = (s: number) => `${(s / TOTAL) * 100}%`;

const stageGroups: { muted?: boolean; items: string[] }[] = [
  { muted: true, items: ['toBack', 'toFront', 'backward', 'forward'] },
  { muted: true, items: ['flipH', 'flipV', 'lockSolid', 'resetBox', 'trashSolid', 'pinLock'] },
  { muted: true, items: ['distV', 'distH', 'spread', 'sameH', 'sameW', 'alLeft', 'alRight', 'alCenter', 'alTop', 'alBottom', 'alMiddle'] },
  { items: ['zoomIn', 'zoomOut'] },
  { items: ['lock'] },
  { items: ['copy', 'paste'] },
  { items: ['undo', 'redo', 'log'] },
];

const editGroups: { muted?: boolean; items: string[] }[] = [
  { items: ['locate', 'funnel', 'textDel'] },
  { muted: true, items: ['t1', 't2', 't3', 't4', 't5', 't6'] },
  { muted: true, items: ['t7'] },
  { muted: true, items: ['t8', 't9'] },
  { muted: true, items: ['t10'] },
];

const headerGroups = [
  [['play', '预览']],
  [['undoSolid', '撤销'], ['redoSolid', '恢复']],
  [['save', '保存'], ['publish', '发布']],
];

const navItems = [
  ['shapes', '图形'], ['drawer', '我的'], ['image', '图片'], ['text', '文本'],
  ['person', '角色'], ['music', '音乐'], ['bubble', '气泡'], ['moreNav', '更多'],
];

const objectTools = [
  ['camera', '镜头'], ['hatch', '背景'], ['effect', '特效'], ['fore', '前景'],
  ['subtitle', '字幕'], ['mask', '蒙版'], ['filter3', '滤镜'], ['mic', '录音'],
  ['tts', '语音合成'], ['scale', '时间缩放'], ['speed', '播放速度: 1.00'], ['mute', '拖动静音'],
];

const shapeArt: ReactNode[] = [
  <path d="M6 4l19 23" />,
  <><path d="M6 4l19 22" /><circle {...F} cx="6" cy="4" r="2" /><circle {...F} cx="25" cy="26" r="2" /></>,
  <path d="M6 2L4 5l18 22 3-3" />,
  <><path strokeWidth="1" strokeDasharray="2 1" d="M4 4l22 23" /><circle {...F} cx="4" cy="4" r="2" /><circle {...F} cx="26" cy="27" r="2" /></>,
  <path strokeWidth="2" strokeDasharray="1 1" d="M6 3L4 6l20 21 2-2" />,
  <><path strokeWidth="2" d="M6 4l14 17" /><path {...F} d="M25 27l-8-4 6-6z" /></>,
  <path strokeWidth="2" strokeDasharray="4 2" d="M3 19c6-10 18-10 24 0" />,
  <><path strokeWidth="2" strokeDasharray="5 2" d="M3 15c5 10 20 9 23-2" /><path {...F} d="M27 8l2.500 6h-5z" /></>,
  <circle cx="15" cy="15" r="10" strokeWidth="2" strokeDasharray="4 2.280" />,
  <path strokeWidth="2" strokeDasharray="2 2" d="M5 6h20v19H5z" />,
  <path strokeWidth="2" strokeDasharray="7 3" d="M14.500 5L25 26H5z" />,
  <path strokeWidth="1.500" d="M11 4c3 1 3 4 1 5s-4 4-2 5 4-5 7-4-1 5-3 7 0 4 2 2 3-4 5-2 1 6-2 6-4-3-2-4 2 4 0 7" />,
  <path d="M4 17c2-12 12-14 14 2" />,
  <path strokeWidth="1.500" d="M4 20v-8l5-5h9c-4 5 0 9 6 9v6" />,
  <path strokeWidth="1.500" strokeDasharray="3 2" d="M4 20v-8l5-5h9c-4 5 0 9 6 9v6" />,
];

const transportArt: ReactNode[] = [
  <><path d="M3 12V1.500h12M9 4.500H5.500V16M17.500 9V4.500" /><path stroke="#2f7fdd" strokeWidth="1.500" d="M14 4.500h3.500V8M8.500 12v3.500H12M14 10.500v6l4-3z" /></>,
  <><path d="M3 12V1.500h12M13 15.500H5.500v-11h12V9" /><path stroke="#2f7fdd" strokeWidth="1.500" d="M14 10.500v6l4-3z" /></>,
  <path stroke="#2f7fdd" fill="#a9c9f0" strokeWidth="1.500" d="M1 0v18l14-9z" />,
  <><path d="M12 13.500H3.500v-11h12V8" /><path stroke="#2f7fdd" strokeWidth="1.500" d="M13 9.500v6l4-3z" /></>,
  <><path d="M7 2.500h8.500V6M3.500 9V2.500H8M8 13.500h3" /><path stroke="#2f7fdd" strokeWidth="1.500" d="M12 2.500h3.500V6M3.500 10v3.500H7M13 9.500v6l4-3z" /></>,
];

const CameraGlyph = () => (
  <Svg width="16" height="12" viewBox="0 0 16 12" aria-hidden="true">
    <path fill="#fff" stroke="#0c857d" d="M.5 1.500h11v2.500l3-2.500v9l-3-2.500v2.500H.5z" />
  </Svg>
);

const AddGlyph = () => (
  <Svg width="18" height="18" viewBox="0 0 18 18" aria-hidden="true">
    <path fill="#5cc76a" stroke="#55945c" d="M9 1l8 8-8 8-8-8z" />
    <path stroke="#fff" strokeWidth="2" d="M9 5.500v7M5.500 9h7" />
  </Svg>
);

/* ---------- app ---------- */

export default function App() {
  return (
    <Shell>
      <GlobalStyle />
      <TitleBar>
        <HiddenDock />
        <MenuBar>
          <Icon name="logo" />
          {['文件', '编辑', '操作', '时间轴', '帮助'].map((m) => <button key={m}>{m}</button>)}
        </MenuBar>
        <WindowTitle>新建工程 - 万彩动画大师 2.9.201</WindowTitle>
        <WindowTools>
          <UpgradeButton>升级账户</UpgradeButton>
          <LoginLink href="#">登录/注册</LoginLink>
          <WindowButton aria-label="最小化"><Icon name="min" /></WindowButton>
          <WindowButton aria-label="还原"><Icon name="restore" /></WindowButton>
          <WindowButton aria-label="关闭"><Icon name="close" /></WindowButton>
        </WindowTools>
      </TitleBar>

      <HeaderBar>
        <BackLink href="#"><Icon name="back" />返回主页</BackLink>
        <HeaderGroups>
          {headerGroups.map((g, i) => (
            <HeaderGroup key={i}>
              {g.map(([icon, label]) => (
                <HeaderButton key={label}><Icon name={icon} />{label}</HeaderButton>
              ))}
            </HeaderGroup>
          ))}
        </HeaderGroups>
        <HeaderLinks>
          <HeaderLink><Icon name="history" />用户反馈</HeaderLink>
          <HeaderLink><Icon name="history" />历史</HeaderLink>
          <HeaderLink><Icon name="gear" />设置</HeaderLink>
        </HeaderLinks>
      </HeaderBar>

      <Workspace>
        <ScenePanel>
          <SceneActions>
            <OutlineButton><Icon name="plusCircle" />新建场景</OutlineButton>
            <OutlineButton aria-label="播放列表"><Icon name="playlist" /></OutlineButton>
          </SceneActions>
          <SceneBody>
            <SceneColumn>
              <SceneList>
                <SceneItem>
                  <SceneNumber>1</SceneNumber>
                  <SceneCard>
                    <Thumb><Duration>00:25</Duration></Thumb>
                    <Caption>
                      <CaptionInput aria-label="备注" placeholder="点击添加备注信息" />
                      <Icon name="pen" />
                    </Caption>
                  </SceneCard>
                  <SceneTools>
                    {['copySmall', 'trashSmall', 'exportSmall', 'swapSmall', 'starSmall', 'soundSmall'].map((n) => (
                      <button key={n} aria-label={n}><Icon name={n} /></button>
                    ))}
                  </SceneTools>
                </SceneItem>
              </SceneList>
              <SceneFooter>
                {['importBox', 'exportBox', 'star', 'up', 'down', 'more'].map((n) => (
                  <button key={n} aria-label={n}><Icon name={n} /></button>
                ))}
              </SceneFooter>
            </SceneColumn>
            <SceneScroll><Icon name="triUp" /><Icon name="triDown" /></SceneScroll>
          </SceneBody>
        </ScenePanel>

        <StageColumn>
          <StageToolbar>
            <StageHome>
              <button aria-label="标尺"><Icon name="ruler" /></button>
              <button aria-label="主页"><Icon name="home" /></button>
            </StageHome>
            {stageGroups.map((g, i) => (
              <ToolGroup key={i} $muted={g.muted}>
                {g.items.map((n) => <button key={n} aria-label={n}><Icon name={n} /></button>)}
              </ToolGroup>
            ))}
          </StageToolbar>
          <Stage>
            <Brackets>
              <Artboard>
                <Guides width="700" height="394" viewBox="0 0 700 394" aria-hidden="true">
                  <path stroke="#b8aaa4" strokeDasharray="5 4" d="M.5.5h699v393H.5z" />
                  <path stroke="#d8241c" strokeWidth="1.500" strokeDasharray="3 6" d="M107.500 62.500L591 60M107.500 62.500L109.500 334M591 60l1.500 271.500M109.500 334L592.500 331.500" />
                  <path stroke="#e87020" strokeWidth="1.300" strokeDasharray="3 6" d="M182.500 104.500L516 102.500M182.500 104.500L184 291.500M516 102.500l1 187M184 291.500L517 289.500" />
                  <path stroke="#a6e2de" strokeWidth="2" d="M317 197h22M361 197h22M350 164v22M350 208v22" />
                  <circle cx="350" cy="197" r="4.500" fill="#a6e2de" stroke="#d6f2f0" />
                </Guides>
                <CameraTag $x={5} $y={6}><CameraGlyph />默认镜头</CameraTag>
                <CameraTag $x={113} $y={69}><CameraGlyph />1</CameraTag>
                <CameraTag $x={188} $y={110}><CameraGlyph />2</CameraTag>
              </Artboard>
            </Brackets>
            <StageGrid />
            <StageInfo>X 35.0 Y 14.1 旋转:0.0 缩放: 36%</StageInfo>
            <StagePill>
              {['fit', 'rotate', 'unlock', 'screen', 'phone', 'dots'].map((n) => (
                <PillButton key={n} aria-label={n} $on={n === 'screen'}><Icon name={n} /></PillButton>
              ))}
            </StagePill>
            <CollapseRight aria-label="收起右侧"><Icon name="chevRight" /></CollapseRight>
            <CollapseDown aria-label="收起底部"><Icon name="chevDown" /></CollapseDown>
            <MiniMap><MiniView /><Icon name="windowSm" /></MiniMap>
          </Stage>
        </StageColumn>

        <LibraryNav>
          {navItems.map(([icon, label], i) => (
            <NavButton key={label} $on={i === 0}>
              <NavIcon $on={i === 0}><Icon name={icon} /></NavIcon>{label}
            </NavButton>
          ))}
        </LibraryNav>
        <Library>
          <SelectBox>
            <CategorySelect aria-label="分类" defaultValue="常用"><option>常用</option></CategorySelect>
            <Icon name="selectArrow" />
          </SelectBox>
          <ShapeScroll>
            <ShapeGrid>
              {shapeArt.map((art, i) => (
                <ShapeTile key={i} aria-label={`图形 ${i + 1}`}>
                  <Svg width="30" height="30" viewBox="0 0 30 30" strokeWidth="1.500">{art}</Svg>
                </ShapeTile>
              ))}
            </ShapeGrid>
            <ScrollThumb />
          </ShapeScroll>
        </Library>
      </Workspace>

      <Timeline>
        <TransportRow>
          <ObjectTools>
            {objectTools.map(([icon, label], i) => (
              <ObjectButton key={label} $on={i < 2}>
                <ObjectIcon $on={i < 2}><Icon name={icon} /></ObjectIcon>{label}
              </ObjectButton>
            ))}
          </ObjectTools>
          <Transport>
            {transportArt.map((art, i) => (
              <RoundButton key={i} $big={i === 2} aria-label={`播放 ${i + 1}`}>
                {i === 2
                  ? <Svg width="16" height="18" viewBox="0 0 16 18">{art}</Svg>
                  : <Svg width="19" height="18" viewBox="0 0 19 18">{art}</Svg>}
              </RoundButton>
            ))}
          </Transport>
          <TransportRight>
            <Icon name="clock" />
            <TimeCode>00:00:00.34/00:00:25.00</TimeCode>
            <Stepper>
              <button aria-label="减少"><Icon name="minus" /></button>
              <StepInput aria-label="时长" defaultValue="00:00:25.00" />
              <button aria-label="增加"><Icon name="plus" /></button>
            </Stepper>
            <FitLabel><FitCheck type="checkbox" />自动适应</FitLabel>
            <FitButton aria-label="适应全部"><Icon name="fitOut" /></FitButton>
            <FitButton aria-label="原始比例"><Icon name="fitOne" /></FitButton>
            <ZoomBox>
              <Icon name="hillS" />
              <ZoomRange type="range" aria-label="时间轴缩放" min={0} max={100} defaultValue={0} />
              <Icon name="hillL" />
            </ZoomBox>
          </TransportRight>
        </TransportRow>

        <EditRow>
          {editGroups.map((g, i) => (
            <ToolGroup key={i} $muted={g.muted} $cell={27}>
              {g.items.map((n) => <button key={n} aria-label={n}><Icon name={n} /></button>)}
            </ToolGroup>
          ))}
          <HelpLink href="#"><Icon name="help" />时间轴帮助</HelpLink>
        </EditRow>

        <TrackBody>
          <TrackHeads>
            <TrackHead $tone="ruler" />
            <TrackHead $tone="camera">
              <Icon name="camera" />镜头
              <HeadHelp aria-label="镜头帮助"><Icon name="help" /></HeadHelp>
              <Dot /><Dot />
            </TrackHead>
            <TrackHead $tone="back"><Icon name="hatch" />背景</TrackHead>
            <TrackFooter>
              {['folderIn', 'folder', 'downBold', 'upBold', 'trashB', 'lockB', 'eye'].map((n) => (
                <FootButton key={n} aria-label={n} $muted={n.endsWith('Bold')}><Icon name={n} /></FootButton>
              ))}
            </TrackFooter>
          </TrackHeads>

          <TrackArea>
            <Ruler>
              {Array.from({ length: TOTAL }, (_, s) => (
                <Second key={s}>
                  <SecondLabels>
                    <SecondLabel $edge={s === 0 ? 'start' : undefined}>{s}s</SecondLabel>
                    {s === TOTAL - 1 && <SecondLabel $edge="end">{TOTAL}s</SecondLabel>}
                  </SecondLabels>
                  <Ticks>{[0, 1, 2, 3, 4].map((t) => <Tick key={t} $major={t === 0} />)}</Ticks>
                </Second>
              ))}
            </Ruler>
            <Track $tone="camera">
              <Clip style={{ left: at(0), width: at(2) }}>默认镜头</Clip>
              <Clip style={{ left: at(2.46), width: at(0.6) }}>镜头</Clip>
              <Marker aria-label="关键帧 1" style={{ left: at(2.46) }} />
              <Marker aria-label="关键帧 2" style={{ left: at(3.06) }} />
              <Clip style={{ left: at(7.33), width: at(0.54) }}>镜头</Clip>
              <Marker $add aria-label="添加镜头" style={{ left: at(8.39) }}><AddGlyph /></Marker>
            </Track>
            <Track $tone="back">
              <TrackSpan style={{ width: at(7.87) }} />
              <Clip style={{ left: at(0), width: at(0.5) }}>纯色</Clip>
              <Clip style={{ left: at(7.36), width: at(0.51) }}>纯色</Clip>
              <Marker $add aria-label="添加背景" style={{ left: at(8.39) }}><AddGlyph /></Marker>
            </Track>
            <AreaFooter />
            <Playhead style={{ left: at(0.34) }}>
              <Svg width="17" height="22" viewBox="0 0 17 22" aria-hidden="true">
                <path fill="#4a9bea" stroke="#1561b4" d="M.5.5h16v15l-8 6-8-6z" />
                <path stroke="#1561b4" d="M5.500 5v8M8.500 5v8M11.500 5v8" />
              </Svg>
            </Playhead>
          </TrackArea>
          <TrackEdge />
        </TrackBody>
      </Timeline>

      <Callout $x={52} $y={510} $w={75} $h={57} />
      <Callout $x={7} $y={644} $w={808} $h={56} />
      <CalloutArrow width="116" height="72" viewBox="0 0 116 72" aria-hidden="true">
        <path fill="#fc3838" stroke="none" d="M2 1l58 31 38 24 4-2 12 15-20-2 2-3-17-9L45 28z" />
      </CalloutArrow>
    </Shell>
  );
}
